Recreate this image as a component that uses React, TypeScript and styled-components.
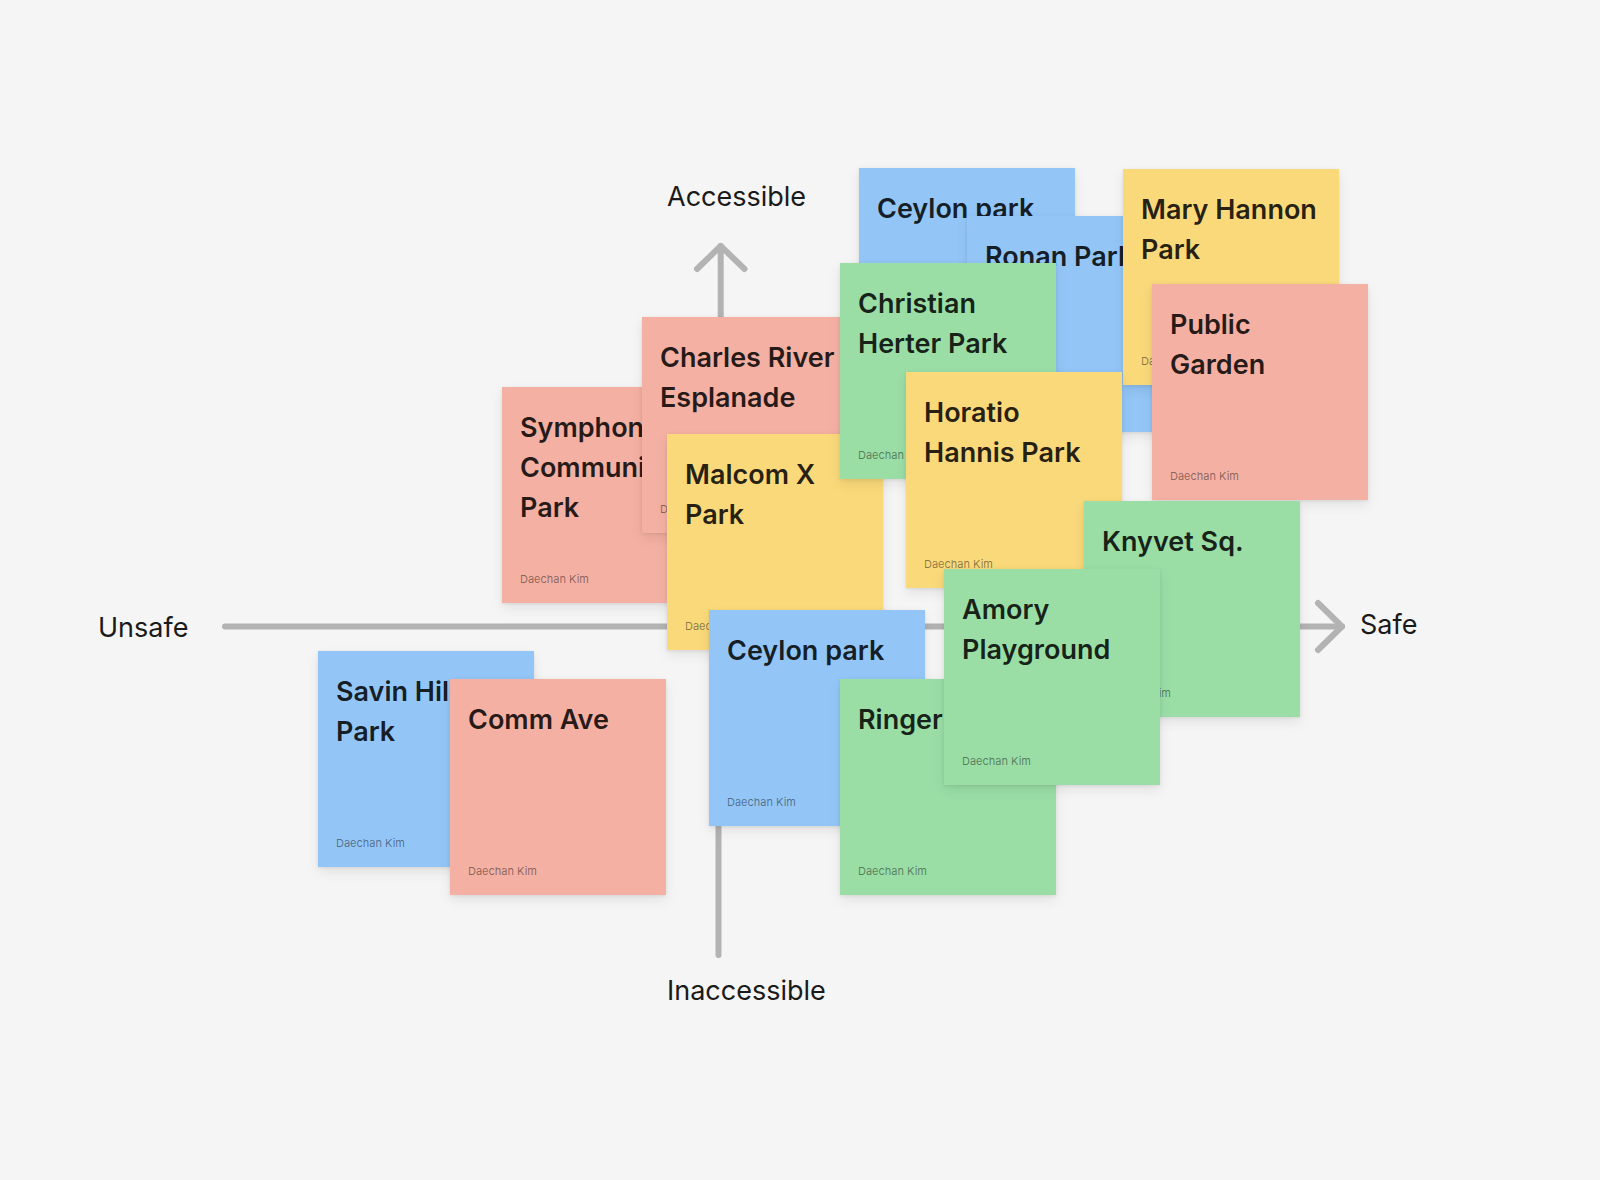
import styled, { createGlobalStyle } from "styled-components";

type Tone = "blue" | "green" | "yellow" | "pink";

const tones: Record<Tone, string> = {
  blue: "#93c6f7",
  green: "#9adea6",
  yellow: "#fad97a",
  pink: "#f4b1a3",
};

type Note = { lines: string[]; tone: Tone; x: number; y: number };

// listed bottom to top, later notes sit over earlier ones
const notes: Note[] = [
  { lines: ["Symphony", "Community", "Park"], tone: "pink", x: 502, y: 387 },
  { lines: ["Charles River", "Esplanade"], tone: "pink", x: 642, y: 317 },
  { lines: ["Malcom X", "Park"], tone: "yellow", x: 667, y: 434 },
  { lines: ["Ceylon park"], tone: "blue", x: 859, y: 168 },
  { lines: ["Ronan Park"], tone: "blue", x: 967, y: 216 },
  { lines: ["Christian", "Herter Park"], tone: "green", x: 840, y: 263 },
  { lines: ["Mary Hannon", "Park"], tone: "yellow", x: 1123, y: 169 },
  { lines: ["Public", "Garden"], tone: "pink", x: 1152, y: 284 },
  { lines: ["Horatio", "Hannis Park"], tone: "yellow", x: 906, y: 372 },
  { lines: ["Knyvet Sq."], tone: "green", x: 1084, y: 501 },
  { lines: ["Ceylon park"], tone: "blue", x: 709, y: 610 },
  { lines: ["Ringer Park"], tone: "green", x: 840, y: 679 },
  { lines: ["Amory", "Playground"], tone: "green", x: 944, y: 569 },
  { lines: ["Savin Hill", "Park"], tone: "blue", x: 318, y: 651 },
  { lines: ["Comm Ave"], tone: "pink", x: 450, y: 679 },
];

const labels = [
  { text: "Accessible", x: 667, y: 181 },
  { text: "Unsafe", x: 98, y: 612 },
  { text: "Safe", x: 1360, y: 609 },
  { text: "Inaccessible", x: 667, y: 975 },
];

const App = () => {
  return (
    <>
      <GlobalStyle />
      <Board>
        <Axes width="1600" height="1180" viewBox="0 0 1600 1180">
          <g
            fill="none"
            stroke="#b3b3b3"
            strokeWidth="6"
            strokeLinecap="round"
            strokeLinejoin="round"
          >
            <line x1="225" y1="626.5" x2="1342" y2="626.5" />
            <polyline points="1318,603 1342,626.5 1318,650" />
            <line x1="720.7" y1="246" x2="720.7" y2="630" />
            <line x1="718.5" y1="626" x2="718.5" y2="955" />
            <polyline points="697,269 720.7,246 744.5,269" />
          </g>
        </Axes>

        {labels.map((l) => (
          <AxisLabel key={l.text} $x={l.x} $y={l.y}>
            {l.text}
          </AxisLabel>
        ))}

        {notes.map((n, i) => (
          <Sticky key={i} $tone={n.tone} $x={n.x} $y={n.y}>
            <Title>
              {n.lines.map((line) => (
                <Line key={line}>{line}</Line>
              ))}
            </Title>
            <Author>Daechan Kim</Author>
          </Sticky>
        ))}
      </Board>
    </>
  );
};

export default App;

const GlobalStyle = createGlobalStyle`
  html, body {
    margin: 0;
    padding: 0;
    background: #f5f5f5;
  }

  body {
    font-family: Inter, "Noto Sans", sans-serif;
    -webkit-font-smoothing: antialiased;
  }
`;

const Board = styled.div`
  position: relative;
  width: 1600px;
  height: 1180px;
  overflow: hidden;
  background: #f5f5f5;
`;

const Axes = styled.svg`
  position: absolute;
  left: 0;
  top: 0;
`;

const AxisLabel = styled.div<{ $x: number; $y: number }>`
  position: absolute;
  left: ${(p) => p.$x}px;
  top: ${(p) => p.$y}px;
  font-size: 27px;
  line-height: 32px;
  font-weight: 400;
  color: #1a1a1a;
  white-space: nowrap;
`;

const Sticky = styled.div<{ $tone: Tone; $x: number; $y: number }>`
  position: absolute;
  left: ${(p) => p.$x}px;
  top: ${(p) => p.$y}px;
  width: 216px;
  height: 216px;
  box-sizing: border-box;
  padding: 21px 20px 17px 18px;
  display: flex;
  flex-direction: column;
  background: ${(p) => tones[p.$tone]};
  box-shadow: 0 1px 3px rgba(0, 0, 0, 0.08), 0 5px 12px rgba(0, 0, 0, 0.08);
`;

const Title = styled.div`
  display: flex;
  flex-direction: column;
  font-size: 27px;
  line-height: 40px;
  font-weight: 600;
  color: rgba(0, 0, 0, 0.86);
`;

const Line = styled.span`
  white-space: nowrap;
`;

const Author = styled.div`
  margin-top: auto;
  font-size: 11px;
  line-height: 14px;
  color: rgba(0, 0, 0, 0.45);
`;
